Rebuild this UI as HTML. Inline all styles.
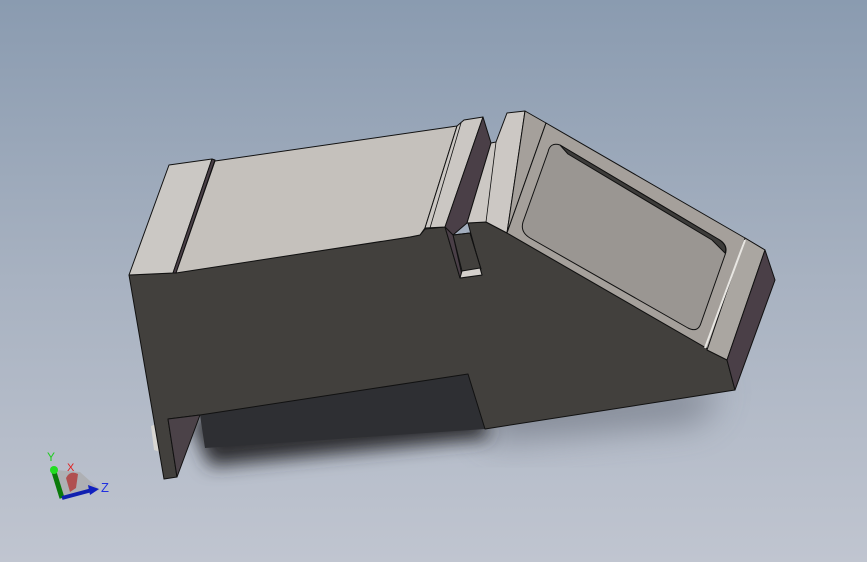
<!DOCTYPE html>
<html><head><meta charset="utf-8"><style>
html,body{margin:0;padding:0;width:867px;height:562px;overflow:hidden}
body{background:linear-gradient(180deg,#8a9bb0 0%,#a8b2c1 50%,#c0c5d0 100%)}
svg{position:absolute;left:0;top:0}
</style></head><body>
<svg width="867" height="562" viewBox="0 0 867 562" xmlns="http://www.w3.org/2000/svg">
<defs>
<filter id="bl" x="-20%" y="-50%" width="140%" height="200%"><feGaussianBlur stdDeviation="9"/></filter>
<filter id="bl2" x="-20%" y="-50%" width="140%" height="200%"><feGaussianBlur stdDeviation="18"/></filter>
</defs>
<polygon points="480,400 720,385 700,420 490,440" fill="#5a5f6a" filter="url(#bl2)" opacity="0.6"/>
<polygon points="190,418 470,378 490,438 210,466" fill="#2e2f33" filter="url(#bl)"/>
<polygon points="200,415 468,374 485,429 205,448" fill="#2e2f33"/>
<g stroke="#111" stroke-width="1" stroke-linejoin="round">
<polygon points="151,426 156,424 160,452 154,450" fill="#d8d6d2" stroke="none"/>
<polygon points="129,275 173,273 410,237 420,235 425,229 445,227 460,278 482,275 468,223 486,222 507,233 727,360 735,390 485,429 468,374 200,415 168,419 177,477 164,479" fill="#42403d"/>
<polygon points="453,235 470,233 481,269 462,271" fill="#42403d"/>
<polygon points="168,419 200,415 177,477" fill="#4b4248"/>
<polygon points="129,275 169,165 212,159 173,273" fill="#cbc8c4"/>
<polygon points="212,159 215,160 176,273 173,273" fill="#4a3f47"/>
<polygon points="215,161 457,126 425,228 420,235 410,237 176,273" fill="#c5c1bc"/>
<polygon points="457,126 464,120 483,117 445,227 425,228" fill="#cbc7c3"/>
<line x1="461" y1="123" x2="430" y2="228" stroke-width="0.8"/>
<polygon points="483,117 491,143 467,223 453,235 445,227" fill="#4a3f47"/>
<polygon points="445,227 453,235 462,275 460,278" fill="#4a3f47"/>
<polygon points="462,271 480,268 482,275 460,278" fill="#d4d0cc"/>
<line x1="453" y1="235" x2="470" y2="233"/>
<line x1="470" y1="233" x2="481" y2="269"/>
<polygon points="491,143 496,142 507,113 525,111 507,233 486,222 467,223" fill="#ccc8c4"/>
<line x1="496" y1="142" x2="486" y2="222" stroke-width="0.8"/>
<polygon points="525,111 546,123 507,233" fill="#a5a09b"/>
<polygon points="546,123 745,238 765,250 727,360 507,233" fill="#a5a09b"/>
<polygon points="745,238 765,250 727,360 707,350" fill="#aaa6a1"/>
<polygon points="765,250 775,280 735,390 727,360" fill="#4a3f47"/>
<path d="M560,145 Q550,142 548,152 L523,222 Q520,232 530,238 L688,328 Q698,333 701,323 L725,255 Q729,245 718,239 Z" fill="#9a9692"/>
<path d="M560,145 L718,239 Q728,245 725,253 L712,240 L568,154 Z" fill="#3d3c3a"/>
<line x1="705" y1="348" x2="745" y2="240" stroke="#e8e6e2" stroke-width="2"/>
</g>
<g>
<polygon points="55,470 80,472 100,490 62,498" fill="#aaaaaa" opacity="0.7"/>
<path d="M70,492 L66,478 Q70,470 78,474 L76,488 Z" fill="#b05050"/>
<line x1="54" y1="472" x2="62" y2="498" stroke="#0a7a0a" stroke-width="5"/>
<circle cx="54" cy="470" r="4" fill="#22dd22"/>
<line x1="62" y1="498" x2="92" y2="490" stroke="#1020b0" stroke-width="4"/>
<polygon points="88,485 99,489 90,495" fill="#1020c0"/>
<text x="47" y="461" font-family="Liberation Sans,sans-serif" font-size="12" fill="#22cc22">Y</text>
<text x="67" y="471" font-family="Liberation Sans,sans-serif" font-size="11" fill="#e02020">X</text>
<text x="101" y="492" font-family="Liberation Sans,sans-serif" font-size="13" fill="#2030e0">Z</text>
</g>
</svg>
</body></html>
